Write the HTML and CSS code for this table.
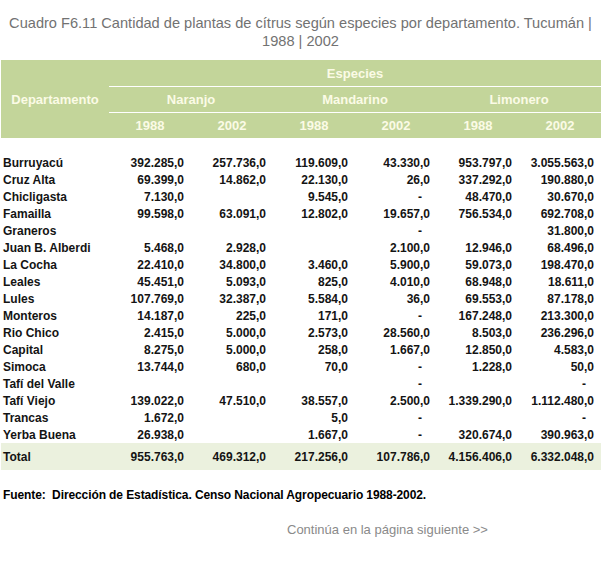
FILE: index.html
```html
<!DOCTYPE html>
<html lang="es">
<head>
<meta charset="utf-8">
<title>Cuadro F6.11</title>
<link rel="stylesheet" href="styles.css">
</head>
<body>
<div class="page">
  <h1 class="title">Cuadro F6.11 Cantidad de plantas de cítrus según especies por departamento. Tucumán |<br>1988 | 2002</h1>
  <table class="data">
    <colgroup>
      <col class="c-dept">
      <col class="c-num"><col class="c-num"><col class="c-num"><col class="c-num"><col class="c-num"><col class="c-num">
    </colgroup>
    <thead>
      <tr class="h1">
        <th rowspan="3" class="h-dept">Departamento</th>
        <th colspan="6" class="h-line">Especies</th>
      </tr>
      <tr class="h2">
        <th colspan="2" class="h-line">Naranjo</th>
        <th colspan="2" class="h-line">Mandarino</th>
        <th colspan="2" class="h-line">Limonero</th>
      </tr>
      <tr class="h3">
        <th>1988</th><th>2002</th><th>1988</th><th>2002</th><th>1988</th><th>2002</th>
      </tr>
    </thead>
    <tbody>
      <tr class="spacer"><td colspan="7"></td></tr>
      <tr><td>Burruyacú</td><td>392.285,0</td><td>257.736,0</td><td>119.609,0</td><td>43.330,0</td><td>953.797,0</td><td>3.055.563,0</td></tr>
      <tr><td>Cruz Alta</td><td>69.399,0</td><td>14.862,0</td><td>22.130,0</td><td>26,0</td><td>337.292,0</td><td>190.880,0</td></tr>
      <tr><td>Chicligasta</td><td>7.130,0</td><td></td><td>9.545,0</td><td><span class="dash">-</span></td><td>48.470,0</td><td>30.670,0</td></tr>
      <tr><td>Famailla</td><td>99.598,0</td><td>63.091,0</td><td>12.802,0</td><td>19.657,0</td><td>756.534,0</td><td>692.708,0</td></tr>
      <tr><td>Graneros</td><td></td><td></td><td></td><td><span class="dash">-</span></td><td></td><td>31.800,0</td></tr>
      <tr><td>Juan B. Alberdi</td><td>5.468,0</td><td>2.928,0</td><td></td><td>2.100,0</td><td>12.946,0</td><td>68.496,0</td></tr>
      <tr><td>La Cocha</td><td>22.410,0</td><td>34.800,0</td><td>3.460,0</td><td>5.900,0</td><td>59.073,0</td><td>198.470,0</td></tr>
      <tr><td>Leales</td><td>45.451,0</td><td>5.093,0</td><td>825,0</td><td>4.010,0</td><td>68.948,0</td><td>18.611,0</td></tr>
      <tr><td>Lules</td><td>107.769,0</td><td>32.387,0</td><td>5.584,0</td><td>36,0</td><td>69.553,0</td><td>87.178,0</td></tr>
      <tr><td>Monteros</td><td>14.187,0</td><td>225,0</td><td>171,0</td><td><span class="dash">-</span></td><td>167.248,0</td><td>213.300,0</td></tr>
      <tr><td>Rio Chico</td><td>2.415,0</td><td>5.000,0</td><td>2.573,0</td><td>28.560,0</td><td>8.503,0</td><td>236.296,0</td></tr>
      <tr><td>Capital</td><td>8.275,0</td><td>5.000,0</td><td>258,0</td><td>1.667,0</td><td>12.850,0</td><td>4.583,0</td></tr>
      <tr><td>Simoca</td><td>13.744,0</td><td>680,0</td><td>70,0</td><td><span class="dash">-</span></td><td>1.228,0</td><td>50,0</td></tr>
      <tr><td>Tafí del Valle</td><td></td><td></td><td></td><td><span class="dash">-</span></td><td></td><td><span class="dash">-</span></td></tr>
      <tr><td>Tafí Viejo</td><td>139.022,0</td><td>47.510,0</td><td>38.557,0</td><td>2.500,0</td><td>1.339.290,0</td><td>1.112.480,0</td></tr>
      <tr><td>Trancas</td><td>1.672,0</td><td></td><td>5,0</td><td><span class="dash">-</span></td><td></td><td><span class="dash">-</span></td></tr>
      <tr><td>Yerba Buena</td><td>26.938,0</td><td></td><td>1.667,0</td><td><span class="dash">-</span></td><td>320.674,0</td><td>390.963,0</td></tr>
      <tr class="total"><td>Total</td><td>955.763,0</td><td>469.312,0</td><td>217.256,0</td><td>107.786,0</td><td>4.156.406,0</td><td>6.332.048,0</td></tr>
    </tbody>
  </table>
  <p class="source">Fuente:&nbsp; Dirección de Estadística. Censo Nacional Agropecuario 1988-2002.</p>
  <p class="next">Continúa en la página siguiente &gt;&gt;</p>
</div>
</body>
</html>
```

FILE: styles.css
```css
html, body {
  margin: 0;
  padding: 0;
  background: #ffffff;
}

.page {
  width: 601px;
  font-family: "Liberation Sans", Arial, sans-serif;
}

.title {
  margin: 0;
  padding-top: 14px;
  font-size: 14.6px;
  font-weight: normal;
  line-height: 18px;
  color: #727272;
  text-align: center;
}

.data {
  margin: 10px 0 0 1px;
  border-collapse: collapse;
  border-spacing: 0;
  table-layout: fixed;
  width: 600px;
  font-size: 12px;
  font-weight: bold;
  color: #141414;
}

.c-dept { width: 108px; }
.c-num { width: 82px; }

.data th {
  background: #c3d59a;
  color: #fbfbe6;
  font-size: 13px;
  font-weight: bold;
  padding: 0;
  text-align: center;
}

.h1 th.h-line { height: 26px; border-bottom: 1px solid #ffffff; }
.h2 th.h-line { height: 25px; border-bottom: 1px solid #ffffff; }
.h3 th { height: 25px; }

.h-dept { vertical-align: middle; }

.data td {
  height: 15px;
  padding: 2px 7px 0 0;
  text-align: right;
  white-space: nowrap;
  line-height: 15px;
}

.data td:first-child {
  text-align: left;
  padding: 2px 0 0 2px;
}

.data .spacer td { height: 16px; padding: 0; }

.dash { margin-right: 8px; }

.data .total td {
  background: #ebf1de;
  height: 25px;
  line-height: 25px;
}

.source {
  margin: 17px 0 0 3px;
  font-size: 12px;
  font-weight: bold;
  color: #000000;
  letter-spacing: -0.1px;
  line-height: 16px;
}

.next {
  margin: 19px 0 0 287px;
  font-size: 13px;
  color: #8a8a8a;
  line-height: 16px;
}
```
